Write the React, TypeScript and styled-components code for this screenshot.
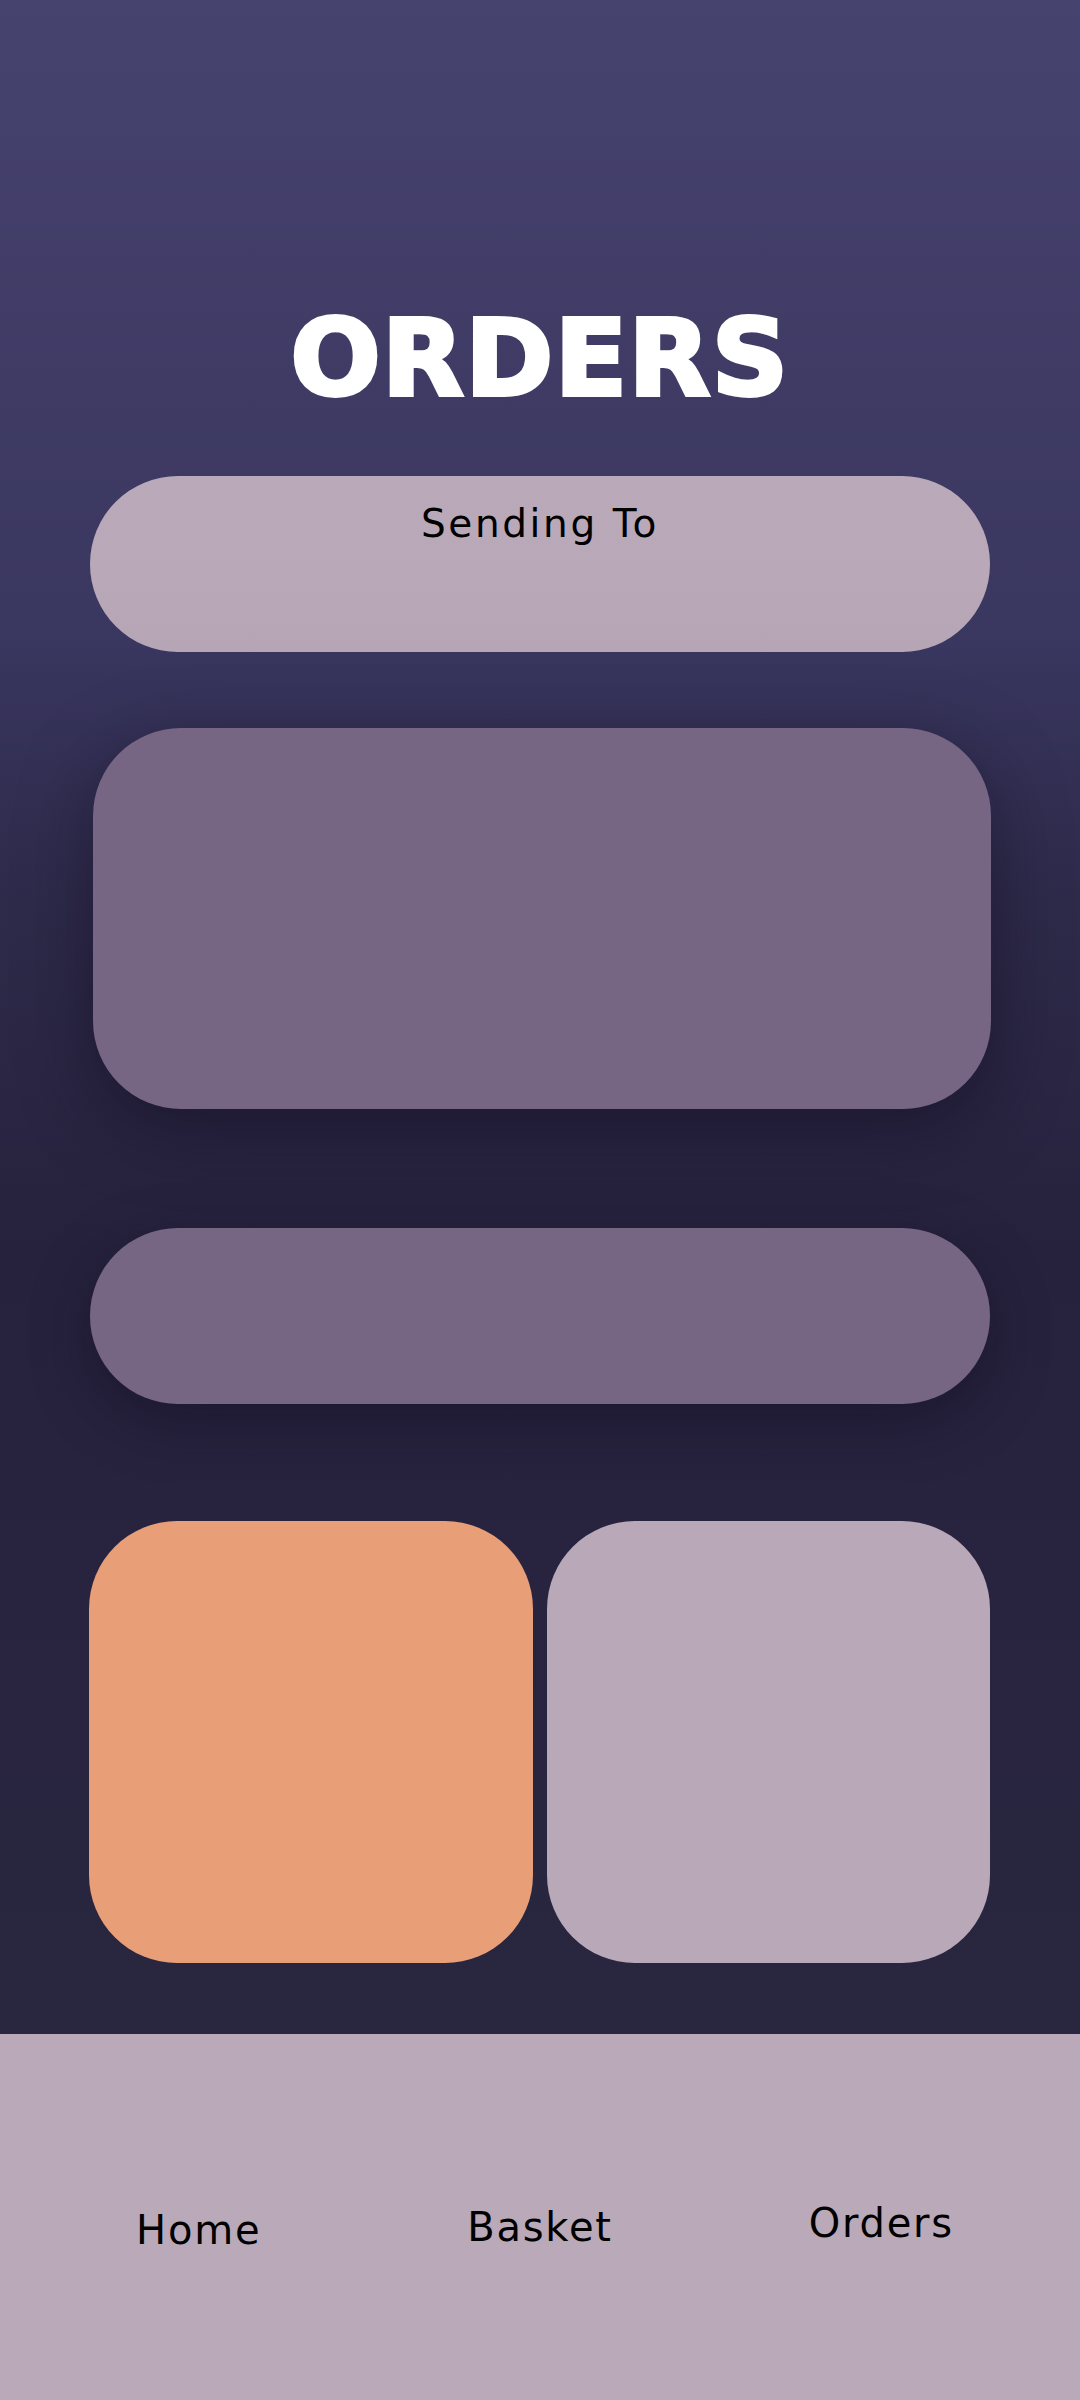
import React from "react";
import styled, { createGlobalStyle } from "styled-components";

const Global = createGlobalStyle`
  html, body { margin: 0; padding: 0; }
  body { font-family: "DejaVu Sans", "Noto Sans", sans-serif; background: #29263f; }
  * { box-sizing: border-box; }
`;

const Screen = styled.div`
  width: 1080px;
  height: 2400px;
  display: flex;
  flex-direction: column;
  overflow: hidden;
`;

const Main = styled.main`
  height: 2034px;
  flex: none;
  display: flex;
  flex-direction: column;
  align-items: center;
  padding-top: 306px;
  background: linear-gradient(
    180deg,
    #46436f 0px,
    #3f3b65 380px,
    #3a3761 620px,
    #2e2a4a 900px,
    #26223d 1250px,
    #28243f 1600px,
    #29263f 2034px
  );
`;

const Title = styled.h1`
  margin: 0;
  font-family: "DejaVu Sans", sans-serif;
  font-weight: 700;
  font-size: 106px;
  line-height: 1;
  letter-spacing: 1.5px;
  color: #ffffff;
  -webkit-text-stroke: 4px #ffffff;
  text-align: center;
`;

const Stack = styled.div`
  width: 900px;
  margin-top: 64px;
  display: flex;
  flex-direction: column;
`;

const Pill = styled.section<{ $tone: "light" | "dark"; $gap: number; $shadow?: boolean }>`
  height: 176px;
  border-radius: 88px;
  margin-top: ${(p) => p.$gap}px;
  display: flex;
  justify-content: center;
  align-items: flex-start;
  padding-top: 28px;
  background: ${(p) =>
    p.$tone === "light"
      ? "linear-gradient(180deg, #baa9b9 0%, #b9a8b8 60%, #b6a5b5 100%)"
      : "#776584"};
  box-shadow: ${(p) => (p.$shadow ? "0 18px 60px rgba(16, 12, 30, 0.45)" : "none")};
`;

const PillLabel = styled.span`
  font-family: "DejaVu Sans", sans-serif;
  font-size: 39px;
  line-height: 1;
  letter-spacing: 2.6px;
  color: #000;
`;

const Card = styled.section`
  height: 381px;
  margin: 76px -1px 0 3px;
  border-radius: 88px;
  background: #776584;
  box-shadow: 0 20px 70px rgba(16, 12, 30, 0.5);
`;

const Tiles = styled.div`
  margin: 117px 0 0 -1px;
  display: grid;
  grid-template-columns: 444px 443px;
  column-gap: 14px;
`;

const Tile = styled.div<{ $color: string }>`
  height: 442px;
  border-radius: 88px;
  background: ${(p) => p.$color};
`;

const Nav = styled.nav`
  flex: 1;
  background: #baa9b9;
  display: grid;
  grid-template-columns: repeat(3, 1fr);
  align-items: start;
  padding: 173px 28px 0;
`;

const NavItem = styled.a<{ $shift: number }>`
  justify-self: center;
  margin-top: ${(p) => p.$shift}px;
  font-family: "DejaVu Sans", sans-serif;
  font-size: 40px;
  line-height: 1;
  letter-spacing: 1.8px;
  color: #000;
  text-decoration: none;
`;

export default function App() {
  return (
    <>
      <Global />
      <Screen>
        <Main>
          <Title>ORDERS</Title>
          <Stack>
            <Pill $tone="light" $gap={0}>
              <PillLabel>Sending To</PillLabel>
            </Pill>
            <Card />
            <Pill $tone="dark" $gap={119} $shadow />
            <Tiles>
              <Tile $color="#e89e77" />
              <Tile $color="#b9a8b8" />
            </Tiles>
          </Stack>
        </Main>
        <Nav>
          <NavItem href="#" $shift={3}>Home</NavItem>
          <NavItem href="#" $shift={0}>Basket</NavItem>
          <NavItem href="#" $shift={-4}>Orders</NavItem>
        </Nav>
      </Screen>
    </>
  );
}
